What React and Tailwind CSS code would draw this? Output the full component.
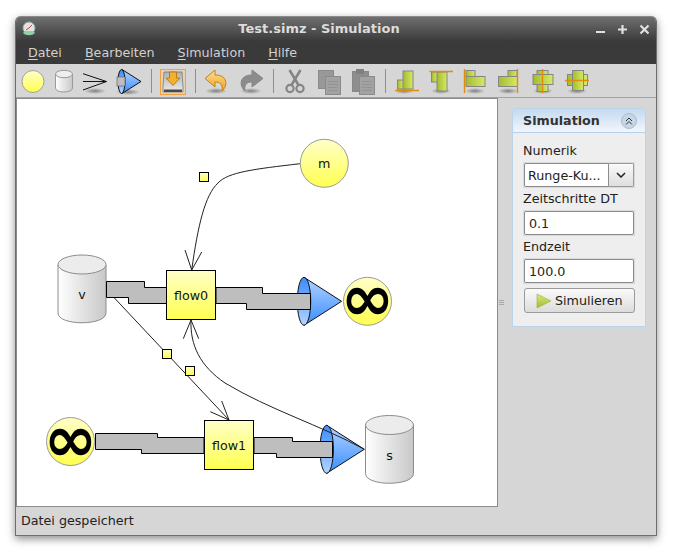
import React from 'react'

const font = { fontFamily: '"DejaVu Sans", sans-serif' }

// toolbar icons are all 32x32, shadow sits under each glyph
const Shadow = ({ cx = 16, rx = 12, cy = 27 }) => (
  <ellipse cx={cx} cy={cy} rx={rx} ry="3" fill="url(#toolShadow)" />
)

const CircleTool = () => (
  <svg width="32" height="32">
    <circle cx="16" cy="17.5" r="11" fill="url(#yellowV)" stroke="#a0a0a0" />
  </svg>
)

const CylinderTool = () => (
  <svg width="32" height="32">
    <path d="M6.5 10 v14 c0 5.3 17 5.3 17 0 v-14" fill="url(#cylBody)" stroke="#9a9a9a" />
    <ellipse cx="15" cy="10" rx="8.5" ry="3.7" fill="#eeeeee" stroke="#9a9a9a" />
  </svg>
)

const ArrowTool = () => (
  <svg width="32" height="32">
    <Shadow cx="14" rx="11" />
    <path d="M2 17.5 H25.5 M2 9.7 L25.5 17.5 M2 26 L25.5 17.5" fill="none" stroke="#111" strokeWidth="1" />
  </svg>
)

const ConeTool = () => (
  <svg width="32" height="32">
    <Shadow cx="15" rx="12" cy="28" />
    <path d="M9 5.5 L28 17.5 L9 29.5 Z" fill="url(#coneFill)" stroke="#111" />
    <ellipse cx="8.5" cy="17.5" rx="3.5" ry="12" fill="url(#coneBase)" stroke="#111" />
    <rect x="4" y="13" width="8" height="9" fill="#bebebe" stroke="#666" strokeWidth="0.7" />
  </svg>
)

const SaveTool = () => (
  <div className="w-[32px] h-[32px] flex items-center justify-center">
    <div className="w-[26px] h-[26px] mt-[4px] border border-[#f0a040] bg-[#e6d2b8] flex items-center justify-center">
      <svg width="24" height="24">
        <path d="M3 2 H21 L22 17 V22 H2 V17 Z" fill="url(#driveFill)" stroke="#777" strokeWidth="0.8" />
        <rect x="3" y="19.5" width="18" height="2.5" fill="#4a4a4a" />
        <path d="M8.5 2 H15.5 V8 H19 L12 15.5 L5 8 H8.5 Z" fill="#f0b030" stroke="#b87410" strokeWidth="0.9" />
      </svg>
    </div>
  </div>
)

const UndoTool = () => (
  <svg width="32" height="32">
    <Shadow cx="15" rx="11" />
    <path d="M14 6 L4 14.5 L14 23 V18 C19 18 22 20 21 27 C27 22 27 11 14 11 Z" fill="url(#orangeV)" stroke="#c08418" strokeLinejoin="round" />
  </svg>
)

const RedoTool = () => (
  <svg width="32" height="32">
    <Shadow cx="16" rx="11" />
    <path d="M17 6 L28 14.5 L17 23 V18 C12 18 9 20 10 27 C4 22 4 11 17 11 Z" fill="#8c8c8c" stroke="#858585" strokeLinejoin="round" />
  </svg>
)

const CutTool = () => (
  <svg width="32" height="32">
    <path d="M10.5 6 L19.5 21 M21.5 6 L12.5 21" stroke="#858585" strokeWidth="2.6" fill="none" />
    <circle cx="11" cy="24.5" r="3.6" fill="none" stroke="#858585" strokeWidth="2.2" />
    <circle cx="21" cy="24.5" r="3.6" fill="none" stroke="#858585" strokeWidth="2.2" />
  </svg>
)

const CopyTool = () => (
  <svg width="32" height="32">
    <rect x="5.5" y="6.5" width="15" height="18" fill="#989898" stroke="#8a8a8a" />
    <rect x="12.5" y="12.5" width="15" height="18" fill="#a2a2a2" stroke="#8a8a8a" />
    <path d="M15 17.5 H25 M15 20.5 H25 M15 23.5 H25 M15 26.5 H25" stroke="#929292" />
  </svg>
)

const PasteTool = () => (
  <svg width="32" height="32">
    <rect x="5.5" y="7.5" width="16" height="20" fill="#8e8e8e" stroke="#888" />
    <rect x="9" y="5" width="8" height="5" fill="#808080" />
    <rect x="12.5" y="12.5" width="15" height="18" fill="#a2a2a2" stroke="#8a8a8a" />
    <path d="M15 17.5 H25 M15 20.5 H25 M15 23.5 H25 M15 26.5 H25" stroke="#929292" />
  </svg>
)

const alignIcons = [
  {
    shadow: 13,
    rects: [[6.5, 16, 6, 9], [12, 7, 10, 18]],
    line: [4.5, 26.5, 28, 26.5],
  },
  {
    shadow: 16,
    rects: [[6.5, 8, 6, 10], [12, 8, 10, 19]],
    line: [4.5, 7.5, 28, 7.5],
  },
  {
    shadow: 16,
    rects: [[7, 6.5, 9, 6], [7, 12.5, 19, 10]],
    line: [5.5, 5, 5.5, 29],
  },
  {
    shadow: 15,
    rects: [[15, 6.5, 9, 6], [5.5, 12.5, 19, 10]],
    line: [24.5, 5, 24.5, 29],
  },
  {
    shadow: 16,
    rects: [[10, 6.5, 11, 21], [6, 10.5, 20, 10]],
    line: [15.5, 5, 15.5, 29],
  },
  {
    shadow: 16,
    rects: [[6.5, 10.5, 20, 11], [11.5, 6.5, 11, 20]],
    line: [4, 16.5, 28, 16.5],
  },
]

const AlignTool = ({ rects, line, shadow }) => (
  <svg width="32" height="32">
    <Shadow cx={shadow} rx="10" />
    {rects.map(([x, y, w, h], i) => (
      <rect key={i} x={x} y={y} width={w} height={h} fill="url(#greenH)" stroke="#858585" />
    ))}
    <line x1={line[0]} y1={line[1]} x2={line[2]} y2={line[3]} stroke="#e08a10" strokeWidth="1.4" />
  </svg>
)

const Separator = () => (
  <div className="w-[12px] h-[24px] mt-[5px] flex justify-center">
    <div className="w-px bg-[#8f8f8f]" />
  </div>
)

const Toolbar = () => (
  <div className="h-[34px] shrink-0 pl-px flex border-b border-[#a3a3a3] bg-[#d6d6d6]">
    <CircleTool />
    <CylinderTool />
    <ArrowTool />
    <ConeTool />
    <Separator />
    <SaveTool />
    <Separator />
    <div className="flex gap-[2px]">
      <UndoTool />
      <RedoTool />
    </div>
    <Separator />
    <div className="flex gap-[2px]">
      <CutTool />
      <CopyTool />
      <PasteTool />
    </div>
    <Separator />
    <div className="flex gap-[2px]">
      {alignIcons.map((icon, i) => (
        <AlignTool key={i} {...icon} />
      ))}
    </div>
  </div>
)

const Node = ({ cx, cy, label }) => (
  <g>
    <circle cx={cx} cy={cy} r="24" fill="url(#yellowV)" stroke="#9a9a9a" />
    <text x={cx} y={cy + 4.5} textAnchor="middle" fontSize="12.7" fill="#111">{label}</text>
  </g>
)

const Infinity = ({ cx, cy }) => (
  <g>
    <circle cx={cx} cy={cy} r="24" fill="url(#yellowV)" stroke="#9a9a9a" />
    <text x={cx} y={cy + 19} textAnchor="middle" fontSize="64" fontWeight="bold" fill="#000">∞</text>
  </g>
)

const Cylinder = ({ x, y, label }) => (
  <g>
    <path d={`M${x} ${y + 10} V${y + 58} C${x} ${y + 71} ${x + 48} ${y + 71} ${x + 48} ${y + 58} V${y + 10}`} fill="url(#cylBody)" stroke="#8c8c8c" />
    <ellipse cx={x + 24} cy={y + 9.5} rx="24" ry="9.5" fill="#ececec" stroke="#8c8c8c" />
    <text x={x + 24} y={y + 44} textAnchor="middle" fontSize="12.7" fill="#111">{label}</text>
  </g>
)

const Cone = ({ cx, cy }) => (
  <g>
    <path d={`M${cx} ${cy - 24} L${cx + 37.6} ${cy} L${cx} ${cy + 24} Z`} fill="url(#coneFill)" stroke="#111" />
    <ellipse cx={cx} cy={cy} rx="6.7" ry="24" fill="url(#coneBase)" stroke="#111" />
  </g>
)

const FlowBox = ({ x, y, label }) => (
  <g>
    <rect x={x} y={y} width="49" height="49" fill="url(#yellowV)" stroke="#000" />
    <text x={x + 24.5} y={y + 29} textAnchor="middle" fontSize="12.7" fill="#111">{label}</text>
  </g>
)

const Handle = ({ cx, cy }) => (
  <rect x={cx - 4.5} y={cy - 4.5} width="9" height="9" fill="url(#yellowV)" stroke="#000" />
)

const Band = ({ d }) => <path d={d} fill="#bebebe" stroke="#000" />

const Diagram = () => (
  <svg viewBox="17 99 480 407" width="480" height="407" className="block" style={font}>
    <defs>
      <linearGradient id="yellowV" x1="0" y1="0" x2="0" y2="1">
        <stop offset="0" stopColor="#ffffc8" />
        <stop offset="1" stopColor="#ffff50" />
      </linearGradient>
      <linearGradient id="cylBody" x1="0" y1="0" x2="1" y2="0">
        <stop offset="0" stopColor="#ffffff" />
        <stop offset="1" stopColor="#c8c8c8" />
      </linearGradient>
      <linearGradient id="coneFill" x1="0" y1="0" x2="0" y2="1">
        <stop offset="0" stopColor="#b4d4ff" />
        <stop offset="1" stopColor="#3a8cff" />
      </linearGradient>
      <linearGradient id="coneBase" x1="0" y1="0" x2="0" y2="1">
        <stop offset="0" stopColor="#3a8cff" />
        <stop offset="1" stopColor="#b4d4ff" />
      </linearGradient>
      <linearGradient id="orangeV" x1="0" y1="0" x2="0" y2="1">
        <stop offset="0" stopColor="#ffe090" />
        <stop offset="1" stopColor="#eca020" />
      </linearGradient>
      <linearGradient id="greenH" x1="0" y1="0" x2="1" y2="0">
        <stop offset="0" stopColor="#a4bc2c" />
        <stop offset="1" stopColor="#d8e868" />
      </linearGradient>
      <linearGradient id="driveFill" x1="0" y1="0" x2="0" y2="1">
        <stop offset="0" stopColor="#b0b0b0" />
        <stop offset="1" stopColor="#ececec" />
      </linearGradient>
      <radialGradient id="toolShadow">
        <stop offset="0" stopColor="#000" stopOpacity="0.4" />
        <stop offset="1" stopColor="#000" stopOpacity="0" />
      </radialGradient>
    </defs>

    {/* edges */}
    <g fill="none" stroke="#222">
      <path d="M300 163.7 C255 169 228 172 218 183 C205 195 198 225 191.7 270 M185 250 L191.7 270 L201.7 252" />
      <path d="M106 289 L229 420 M210.3 411.7 L229 420 L221.7 401" />
    </g>

    <Cylinder x={58} y={255} label="v" />
    <Band d="M106.5 281.5 H144.5 V287.5 H166.5 V303.5 H128.5 V297.5 H106.5 Z" />
    <FlowBox x={166.5} y={270.5} label="flow0" />
    <Cone cx={304} cy={301.3} />
    <Band d="M216 287.5 H262.5 V293.5 H310.5 V309.5 H246.5 V303.5 H216 Z" />
    <Infinity cx={367.5} cy={301.3} />

    <Node cx={324.3} cy={163.3} label="m" />

    <Infinity cx={70.5} cy={441.5} />
    <Band d="M95.5 433.5 H157.5 V437.5 H204 V453.5 H141.5 V449.5 H95.5 Z" />
    <FlowBox x={204.5} y={420.5} label="flow1" />
    <Cone cx={326.7} cy={449.3} />
    <Band d="M254 437.5 H292.5 V441.5 H332.5 V457.5 H276.5 V453.5 H254 Z" />
    <Cylinder x={365.5} y={415.5} label="s" />

    <g fill="none" stroke="#222">
      <path d="M364.3 449.3 C320 425 270 410 225 383 C200 366 190 345 191 320 M183.3 338.7 L191 320 L198.7 338.7" />
    </g>

    <Handle cx={204} cy={177} />
    <Handle cx={167} cy={354} />
    <Handle cx={190} cy={371} />
  </svg>
)

const Field = ({ value }) => (
  <div className="h-[26px] bg-[#d9d9d9] p-px">
    <div className="h-full pl-[4px] pt-px flex items-center bg-white border border-[#8c8c8c] rounded-[2px] text-[#222]">
      {value}
    </div>
  </div>
)

const SimPanel = () => (
  <div className="w-[134px] h-[219px] mt-[10px] flex flex-col border border-[#bcd4ea] rounded-t-[3px] bg-[#eeeeee]">
    <div className="h-[24px] shrink-0 pl-[10px] pr-[8px] flex items-center justify-between border-b border-[#b4d0ec] bg-linear-to-b from-[#c4daf0] to-[#f2f6fb]">
      <span className="text-[12.7px] font-bold text-[#333]">Simulation</span>
      <div className="w-[16px] h-[16px] rounded-full bg-[#c6d6e6] border border-[#a9bccf] flex items-center justify-center">
        <svg width="10" height="10" fill="none" stroke="#333" strokeWidth="1">
          <path d="M2 5 L5 2 L8 5 M2 8.5 L5 5.5 L8 8.5" />
        </svg>
      </div>
    </div>
    <div className="px-[10px] flex flex-col text-[12.7px] text-[#222]">
      <div className="h-[29px] pt-[7px] flex items-center">Numerik</div>
      <div className="h-[26px] flex bg-[#d9d9d9] p-px">
        <div className="w-[85px] pl-[3px] pt-px flex items-center bg-white border border-[#8c8c8c] rounded-l-[2px] whitespace-nowrap">
          Runge-Ku...
        </div>
        <div className="flex-1 flex items-center justify-center border border-l-0 border-[#9a9a9a] rounded-r-[2px] bg-linear-to-b from-[#fafafa] to-[#dedede]">
          <svg width="10" height="6" fill="none" stroke="#222" strokeWidth="1.5">
            <path d="M1 1 L5 5 L9 1" />
          </svg>
        </div>
      </div>
      <div className="h-[22px] flex items-center">Zeitschritte DT</div>
      <Field value="0.1" />
      <div className="h-[22px] flex items-center">Endzeit</div>
      <Field value="100.0" />
      <div className="mt-[4px] ml-px h-[25px] flex items-center gap-[3px] pl-[11px] border border-[#9a9a9a] rounded-[3px] bg-linear-to-b from-[#fafafa] to-[#dcdcdc]">
        <svg width="16" height="16">
          <path d="M1 1 L15 8 L1 15 Z" fill="url(#playFill)" stroke="#9ab040" strokeWidth="0.6" />
          <defs>
            <linearGradient id="playFill" x1="0" y1="0" x2="0" y2="1">
              <stop offset="0" stopColor="#d8e880" />
              <stop offset="1" stopColor="#9cc030" />
            </linearGradient>
          </defs>
        </svg>
        <span>Simulieren</span>
      </div>
    </div>
  </div>
)

const menu = [
  ['D', 'atei', 'ml-[12px]'],
  ['B', 'earbeiten', 'ml-[23px]'],
  ['S', 'imulation', 'ml-[23px]'],
  ['H', 'ilfe', 'ml-[23px]'],
]

export default function App() {
  return (
    <div className="w-[675px] h-[552px] pt-[16px] pl-[15px] bg-white overflow-hidden" style={font}>
      <div className="w-[642px] h-[520px] flex flex-col border-x border-b border-[#6e6e6e] rounded-t-[6px] bg-[#d6d6d6] shadow-[0_3px_8px_rgba(0,0,0,0.45)] overflow-hidden">
        {/* title bar */}
        <div className="h-[25px] shrink-0 flex items-center justify-between pl-[5px] pr-[6px] bg-linear-to-b from-[#707070] to-[#3b3b3b] border-t border-[#8a8a8a]">
          <svg width="16" height="16">
            <circle cx="8" cy="7" r="6" fill="#dfe6e0" stroke="#9aa" />
            <path d="M8 7 L11 4 M8 7 L5 9" stroke="#c44" />
            <path d="M2 12 C5 15 11 15 14 12 L12 10 H4 Z" fill="#8fd0a8" />
          </svg>
          <span className="ml-[6px] text-[13px] font-bold text-[#dcdcdc]">Test.simz - Simulation</span>
          <div className="flex items-center gap-[11px] text-[#e0e0e0]">
            <svg width="11" height="11" stroke="currentColor" strokeWidth="2.2"><path d="M1 8 H10" /></svg>
            <svg width="11" height="11" stroke="currentColor" strokeWidth="2.2"><path d="M1 5.5 H10 M5.5 1 V10" /></svg>
            <svg width="11" height="11" stroke="currentColor" strokeWidth="2.2"><path d="M1.5 1.5 L9.5 9.5 M9.5 1.5 L1.5 9.5" /></svg>
          </div>
        </div>

        {/* menu bar */}
        <div className="h-[23px] shrink-0 flex items-center bg-[#3a3a3a] text-[12.7px] text-[#d0d0d0]">
          {menu.map(([first, rest, cls]) => (
            <span key={first} className={cls}>
              <span className="underline underline-offset-2">{first}</span>
              {rest}
            </span>
          ))}
        </div>

        <Toolbar />

        <div className="flex-1 flex min-h-0">
          <div className="w-[482px] border border-[#8a8a8a] bg-white">
            <Diagram />
          </div>
          <div className="w-[5px] ml-px self-center flex flex-col gap-px">
            <div className="h-px bg-[#a8a8a8]" />
            <div className="h-px bg-[#a8a8a8]" />
            <div className="h-px bg-[#a8a8a8]" />
          </div>
          <div className="ml-[8px]">
            <SimPanel />
          </div>
        </div>

        {/* status bar */}
        <div className="h-[28px] shrink-0 pl-[5px] flex items-center text-[12.7px] text-[#222]">
          Datei gespeichert
        </div>
      </div>
    </div>
  )
}
